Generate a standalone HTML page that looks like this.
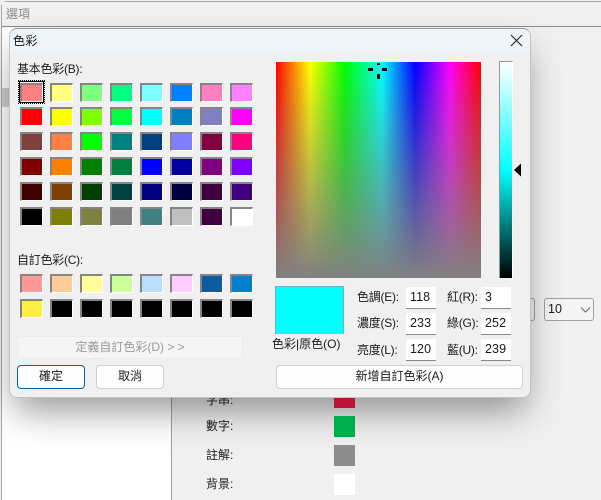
<!DOCTYPE html>
<html lang="zh-Hant"><head><meta charset="utf-8"><style>
html,body{margin:0;padding:0;width:601px;height:500px;overflow:hidden;background:#f0f0f0}
*{box-sizing:border-box}
body{position:relative;font:12px/16px "Liberation Sans","Noto Sans CJK TC",sans-serif;color:#1a1a1a}
div{position:absolute}
.t{white-space:nowrap}
.l{letter-spacing:-.25px}
.s{width:23px;height:19px;border:2px solid #858585;border-right:1px solid #fff;border-bottom:1px solid #fff}
.i{width:30px;height:22px;background:#fff;border-bottom:1px solid #8a8a8a;padding:2px 0 2px 4px;font-size:12.5px;line-height:16px;letter-spacing:.1px;border-radius:2px 2px 0 0}
.b{background:#fdfdfd;border:1px solid #d0d0d0;border-radius:4px;text-align:center;line-height:21px}
</style></head><body>
<div style="left:1px;top:1px;width:600px;height:499px;border:1px solid #a8a8a8;border-right:0;border-bottom:0;border-radius:6px 0 0 0"></div>
<div style="left:2px;top:2px;width:599px;height:25px;background:#f0f0f0;border-bottom:1px solid #8c8c8c"></div>
<div class="t" style="left:6px;top:6px;color:#8a8a8a;font-size:12px">選項</div>
<div style="left:2px;top:28px;width:169px;height:472px;background:#fff"></div>
<div style="left:2px;top:88px;width:7px;height:19px;background:#cfcfcf"></div>
<div style="left:171px;top:28px;width:1px;height:472px;background:#a0a0a0"></div>
<div style="left:528px;top:298px;width:7px;height:23px;background:#f4f4f4;border:1px solid #a0a0a0;border-left:0;border-radius:0 3px 3px 0"></div>
<div style="left:544px;top:298px;width:50px;height:23px;background:#f4f4f4;border:1px solid #a0a0a0;border-radius:3px"></div>
<div class="t" style="left:548px;top:301px;font-size:12.5px">10</div>
<svg style="position:absolute;left:580px;top:306px" width="12" height="8"><path d="M1 1.5 L5.5 6 L10 1.5" fill="none" stroke="#666" stroke-width="1"/></svg>

<div style="left:9px;top:28px;width:522px;height:370px;background:#f0f0f0;border-radius:8px;box-shadow:0 18px 36px -6px rgba(0,0,0,.42);border:1px solid #c4c4c4;border-top-color:#9a9a9a"></div>
<div style="left:10px;top:29px;width:520px;height:24px;background:#eff4f9;border-radius:8px 8px 0 0"></div>

<div class="t" style="left:206px;top:392px;clip-path:inset(6px 0 0 0)">字串:</div>
<div style="left:334px;top:398px;width:21px;height:10px;background:#bb1535"></div>
<div class="t" style="left:206px;top:418px">數字:</div>
<div style="left:334px;top:416px;width:21px;height:21px;background:#00ad4e"></div>
<div class="t" style="left:206px;top:447px">註解:</div>
<div style="left:334px;top:445px;width:21px;height:21px;background:#8c8c8c"></div>
<div class="t" style="left:206px;top:476px">背景:</div>
<div style="left:334px;top:474px;width:21px;height:21px;background:#fff"></div>

<div class="t" style="left:13px;top:33px;font-size:12px;letter-spacing:.4px;color:#111">色彩</div>
<svg style="position:absolute;left:510px;top:34px" width="13" height="13"><path d="M1 1 L12 12 M12 1 L1 12" stroke="#222" stroke-width="1.1"/></svg>

<div class="t l" style="left:17px;top:61px">基本色彩(B):</div>
<div style="left:18px;top:80px;width:27px;height:24px;border:1px dotted #000"></div>
<div style="left:19px;top:81px;width:25px;height:22px;border:1px solid #000"></div>

<div class="s" style="left:20px;top:83px;background:#ff8080"></div><div class="s" style="left:50px;top:83px;background:#ffff80"></div><div class="s" style="left:80px;top:83px;background:#80ff80"></div><div class="s" style="left:110px;top:83px;background:#00ff80"></div><div class="s" style="left:140px;top:83px;background:#80ffff"></div><div class="s" style="left:170px;top:83px;background:#0080ff"></div><div class="s" style="left:200px;top:83px;background:#ff80c0"></div><div class="s" style="left:230px;top:83px;background:#ff80ff"></div>
<div class="s" style="left:20px;top:107px;background:#ff0000"></div><div class="s" style="left:50px;top:107px;background:#ffff00"></div><div class="s" style="left:80px;top:107px;background:#80ff00"></div><div class="s" style="left:110px;top:107px;background:#00ff40"></div><div class="s" style="left:140px;top:107px;background:#00ffff"></div><div class="s" style="left:170px;top:107px;background:#0080c0"></div><div class="s" style="left:200px;top:107px;background:#8080c0"></div><div class="s" style="left:230px;top:107px;background:#ff00ff"></div>
<div class="s" style="left:20px;top:132px;background:#804040"></div><div class="s" style="left:50px;top:132px;background:#ff8040"></div><div class="s" style="left:80px;top:132px;background:#00ff00"></div><div class="s" style="left:110px;top:132px;background:#008080"></div><div class="s" style="left:140px;top:132px;background:#004080"></div><div class="s" style="left:170px;top:132px;background:#8080ff"></div><div class="s" style="left:200px;top:132px;background:#800040"></div><div class="s" style="left:230px;top:132px;background:#ff0080"></div>
<div class="s" style="left:20px;top:157px;background:#800000"></div><div class="s" style="left:50px;top:157px;background:#ff8000"></div><div class="s" style="left:80px;top:157px;background:#008000"></div><div class="s" style="left:110px;top:157px;background:#008040"></div><div class="s" style="left:140px;top:157px;background:#0000ff"></div><div class="s" style="left:170px;top:157px;background:#0000a0"></div><div class="s" style="left:200px;top:157px;background:#800080"></div><div class="s" style="left:230px;top:157px;background:#8000ff"></div>
<div class="s" style="left:20px;top:182px;background:#400000"></div><div class="s" style="left:50px;top:182px;background:#804000"></div><div class="s" style="left:80px;top:182px;background:#004000"></div><div class="s" style="left:110px;top:182px;background:#004040"></div><div class="s" style="left:140px;top:182px;background:#000080"></div><div class="s" style="left:170px;top:182px;background:#000040"></div><div class="s" style="left:200px;top:182px;background:#400040"></div><div class="s" style="left:230px;top:182px;background:#400080"></div>
<div class="s" style="left:20px;top:207px;background:#000000"></div><div class="s" style="left:50px;top:207px;background:#808000"></div><div class="s" style="left:80px;top:207px;background:#808040"></div><div class="s" style="left:110px;top:207px;background:#808080"></div><div class="s" style="left:140px;top:207px;background:#408080"></div><div class="s" style="left:170px;top:207px;background:#c0c0c0"></div><div class="s" style="left:200px;top:207px;background:#400040"></div><div class="s" style="left:230px;top:207px;background:#ffffff"></div>

<div class="t l" style="left:17px;top:252px">自訂色彩(C):</div>
<div class="s" style="left:20px;top:274px;background:#ff9999"></div><div class="s" style="left:50px;top:274px;background:#ffcc99"></div><div class="s" style="left:80px;top:274px;background:#ffff99"></div><div class="s" style="left:110px;top:274px;background:#ccff99"></div><div class="s" style="left:140px;top:274px;background:#bbddff"></div><div class="s" style="left:170px;top:274px;background:#ffccff"></div><div class="s" style="left:200px;top:274px;background:#0f5b9f"></div><div class="s" style="left:230px;top:274px;background:#0080cc"></div>
<div class="s" style="left:20px;top:299px;background:#ffee44"></div><div class="s" style="left:50px;top:299px;background:#000"></div><div class="s" style="left:80px;top:299px;background:#000"></div><div class="s" style="left:110px;top:299px;background:#000"></div><div class="s" style="left:140px;top:299px;background:#000"></div><div class="s" style="left:170px;top:299px;background:#000"></div><div class="s" style="left:200px;top:299px;background:#000"></div><div class="s" style="left:230px;top:299px;background:#000"></div>

<div class="b" style="left:17px;top:336px;width:226px;height:23px;background:#f5f5f5;border-color:#ececec;color:#9a9a9a">定義自訂色彩(D) &gt; &gt;</div>
<div class="b" style="left:17px;top:365px;width:68px;height:24px;border-color:#0a5f9e">確定</div>
<div class="b" style="left:96px;top:365px;width:68px;height:24px">取消</div>

<div style="left:276px;top:62px;width:205px;height:216px;background:linear-gradient(to bottom,rgba(128,128,128,0),#808080),linear-gradient(to right,#f00 0,#ff0 16.6%,#0f0 33.6%,#0ff 51.7%,#00f 67.8%,#f0f 84.9%,#f00 100%)"></div>
<div style="left:368px;top:68px;width:5px;height:3px;background:#000"></div>
<div style="left:382px;top:68px;width:5px;height:3px;background:#000"></div>
<div style="left:377px;top:63px;width:3px;height:2px;background:#000"></div>
<div style="left:377px;top:74px;width:3px;height:5px;background:#000"></div>
<div style="left:499px;top:61px;width:14px;height:217px;border:1px solid #999;border-bottom:0;border-right-color:#fff;background:linear-gradient(to bottom,#fff 0,#0ff 50%,#000 100%)"></div>
<svg style="position:absolute;left:513px;top:163px" width="10" height="15"><path d="M1 7 L8 0.5 L8 13.5 Z" fill="#000"/></svg>

<div style="left:275px;top:286px;width:69px;height:48px;background:#00ffff;border:1px solid #6fb5b5;border-bottom:0"></div>
<div class="t" style="left:272px;top:336px">色彩|原色(O)</div>

<div class="t l" style="left:357px;top:289px">色調(E):</div>
<div class="t l" style="left:357px;top:315px">濃度(S):</div>
<div class="t l" style="left:357px;top:342px">亮度(L):</div>
<div class="t l" style="left:447px;top:289px">紅(R):</div>
<div class="t l" style="left:447px;top:315px">綠(G):</div>
<div class="t l" style="left:447px;top:342px">藍(U):</div>
<div class="i" style="left:406px;top:287px">118</div>
<div class="i" style="left:406px;top:313px">233</div>
<div class="i" style="left:406px;top:339px">120</div>
<div class="i" style="left:481px;top:287px">3</div>
<div class="i" style="left:481px;top:313px">252</div>
<div class="i" style="left:481px;top:339px">239</div>
<div class="b" style="left:276px;top:365px;width:247px;height:24px">新增自訂色彩(A)</div>
</body></html>
